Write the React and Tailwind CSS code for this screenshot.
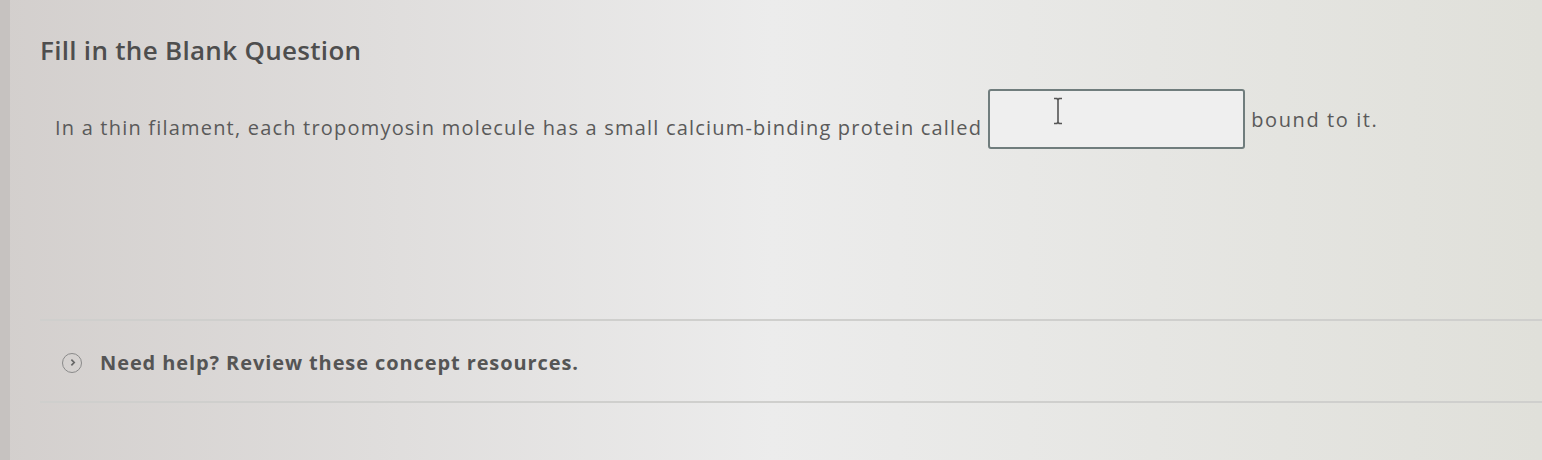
import React from "react";

export default function App() {
  return (
    <div className="relative h-[460px] w-full overflow-hidden bg-linear-to-r from-[#d3cfcd] via-[#ececec] to-[#e0e0da] font-['Open_Sans',sans-serif]">
      <div className="absolute inset-y-0 left-0 w-[10px] bg-[#c6c2c0]" />
      <div className="flex flex-col pl-[40px]">
        <h1 className="mt-[35px] text-[26px] leading-[30px] font-semibold tracking-[0.3px] text-[#4e4e4e]">
          Fill in the Blank Question
        </h1>
        <div className="mt-[24px] flex items-start pl-[15px]">
          <span className="mt-[26px] text-[20px] leading-[26px] tracking-[1.2px] text-[#5a5a5a]">
            In a thin filament, each tropomyosin molecule has a small calcium-binding protein called
          </span>
          <div className="relative ml-[6px] h-[60px] w-[257px] rounded-[3px] border-2 border-[#707d7d] bg-[#efefef]">
            <svg className="absolute left-[62px] top-[6px]" width="12" height="28" viewBox="0 0 12 28">
              <path d="M2 1.5h3l1 1.5 1-1.5h3M6 3v22M2 26.5h3l1-1.5 1 1.5h3" fill="none" stroke="#555" strokeWidth="1.6" />
            </svg>
          </div>
          <span className="ml-[6px] mt-[18px] text-[20px] leading-[26px] tracking-[1.6px] text-[#5a5a5a]">bound to it.</span>
        </div>
        <div className="mt-[170px] h-[2px] bg-[#cfcfcd]" />
        <div className="flex h-[80px] items-center pl-[22px] pt-[3px]">
          <span className="flex h-[20px] w-[20px] items-center justify-center rounded-full border-[1.5px] border-[#8a8a8a]">
            <svg width="9" height="9" viewBox="0 0 8 8">
              <path d="M3 1.5 5.5 4 3 6.5" fill="none" stroke="#666" strokeWidth="1.5" />
            </svg>
          </span>
          <span className="ml-[18px] text-[20px] leading-[26px] font-bold tracking-[0.9px] text-[#555]">
            Need help? Review these concept resources.
          </span>
        </div>
        <div className="h-[2px] bg-[#cfcfcd]" />
      </div>
    </div>
  );
}
